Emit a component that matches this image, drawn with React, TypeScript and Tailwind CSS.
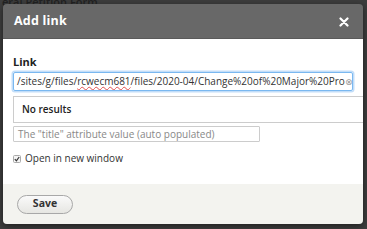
import React from "react";

export default function App() {
  return (
    <div
      className="relative w-[367px] h-[229px] overflow-hidden bg-[#3d3d3d]"
      style={{ fontFamily: '"Open Sans", "DejaVu Sans", sans-serif' }}
    >
      <div className="absolute left-[2px] -top-[6px] text-[11px] font-semibold text-[#222]">
        eral Petition Form
      </div>

      <div className="absolute left-[3px] top-[4px] w-[360px] h-[220px] rounded-[4px] overflow-hidden flex flex-col shadow-[0_2px_6px_rgba(0,0,0,0.5)]">
        <div className="h-[35px] bg-[#686868] flex items-center justify-between pl-[11px] pr-[14px] border-b border-[#5a5a5a]">
          <span className="text-white font-bold text-[12.5px] tracking-[0.2px]">Add link</span>
          <svg width="10" height="10" viewBox="0 0 10 10" className="mt-[1px]">
            <path d="M1.5 1.5 L8.5 8.5 M8.5 1.5 L1.5 8.5" stroke="white" strokeWidth="2.2" strokeLinecap="round" />
          </svg>
        </div>

        <div className="relative flex-1 bg-white pl-[10px] pr-[10px] pt-[16px]">
          <div className="text-[11px] font-bold text-[#222] leading-[14px]">Link</div>
          <div className="mt-[3px] h-[19px] w-[340px] rounded-[2px] border border-[#7ab8f0] shadow-[0_0_0_1.5px_rgba(120,180,240,0.45)] flex items-center pl-[3px] pr-[2px] text-[10px] text-[#333] whitespace-nowrap overflow-hidden">
            <span>/sites/g/files/</span>
            <span className="underline decoration-wavy decoration-[#e05050] decoration-[1px]">rcwecm681</span>
            <span>/files/2020-04/Change%20of%20Major%20Pro</span>
            <span className="ml-auto text-[#999] text-[9px]">⊗</span>
          </div>
          <div className="mt-[2px] text-[8px] text-[#888] leading-[9px]">
            Start typing to find content or paste a URL.
          </div>
          <div className="absolute left-[10px] right-0 top-[57px] h-[27px] bg-white border border-[#ccc] border-r-0 flex items-center pl-[8px] text-[10px] font-semibold text-[#222]">
            No results
          </div>

          <div className="mt-[24px] h-[16px] w-[247px] border border-[#ccc] rounded-[1px] flex items-center pl-[4px] text-[10px] text-[#888] whitespace-nowrap">
            The "title" attribute value (auto populated)
          </div>

          <div className="mt-[9px] flex items-center gap-[4px] text-[10px] text-[#333]">
            <span className="w-[8px] h-[8px] rounded-[1.5px] border border-[#aaa] bg-[#f4f4f4] flex items-center justify-center">
              <svg width="6" height="6" viewBox="0 0 6 6">
                <path d="M0.8 3.2 L2.4 4.8 L5.2 1" stroke="#333" strokeWidth="1.2" fill="none" />
              </svg>
            </span>
            <span>Open in new window</span>
          </div>
        </div>

        <div className="h-[40px] bg-[#f3f3ef] flex items-center pl-[14px]">
          <button className="w-[56px] h-[19px] rounded-full border border-[#a8a8a8] bg-gradient-to-b from-[#fafafa] to-[#e6e6e2] text-[10.5px] font-bold text-[#333]">
            Save
          </button>
        </div>
      </div>
    </div>
  );
}
